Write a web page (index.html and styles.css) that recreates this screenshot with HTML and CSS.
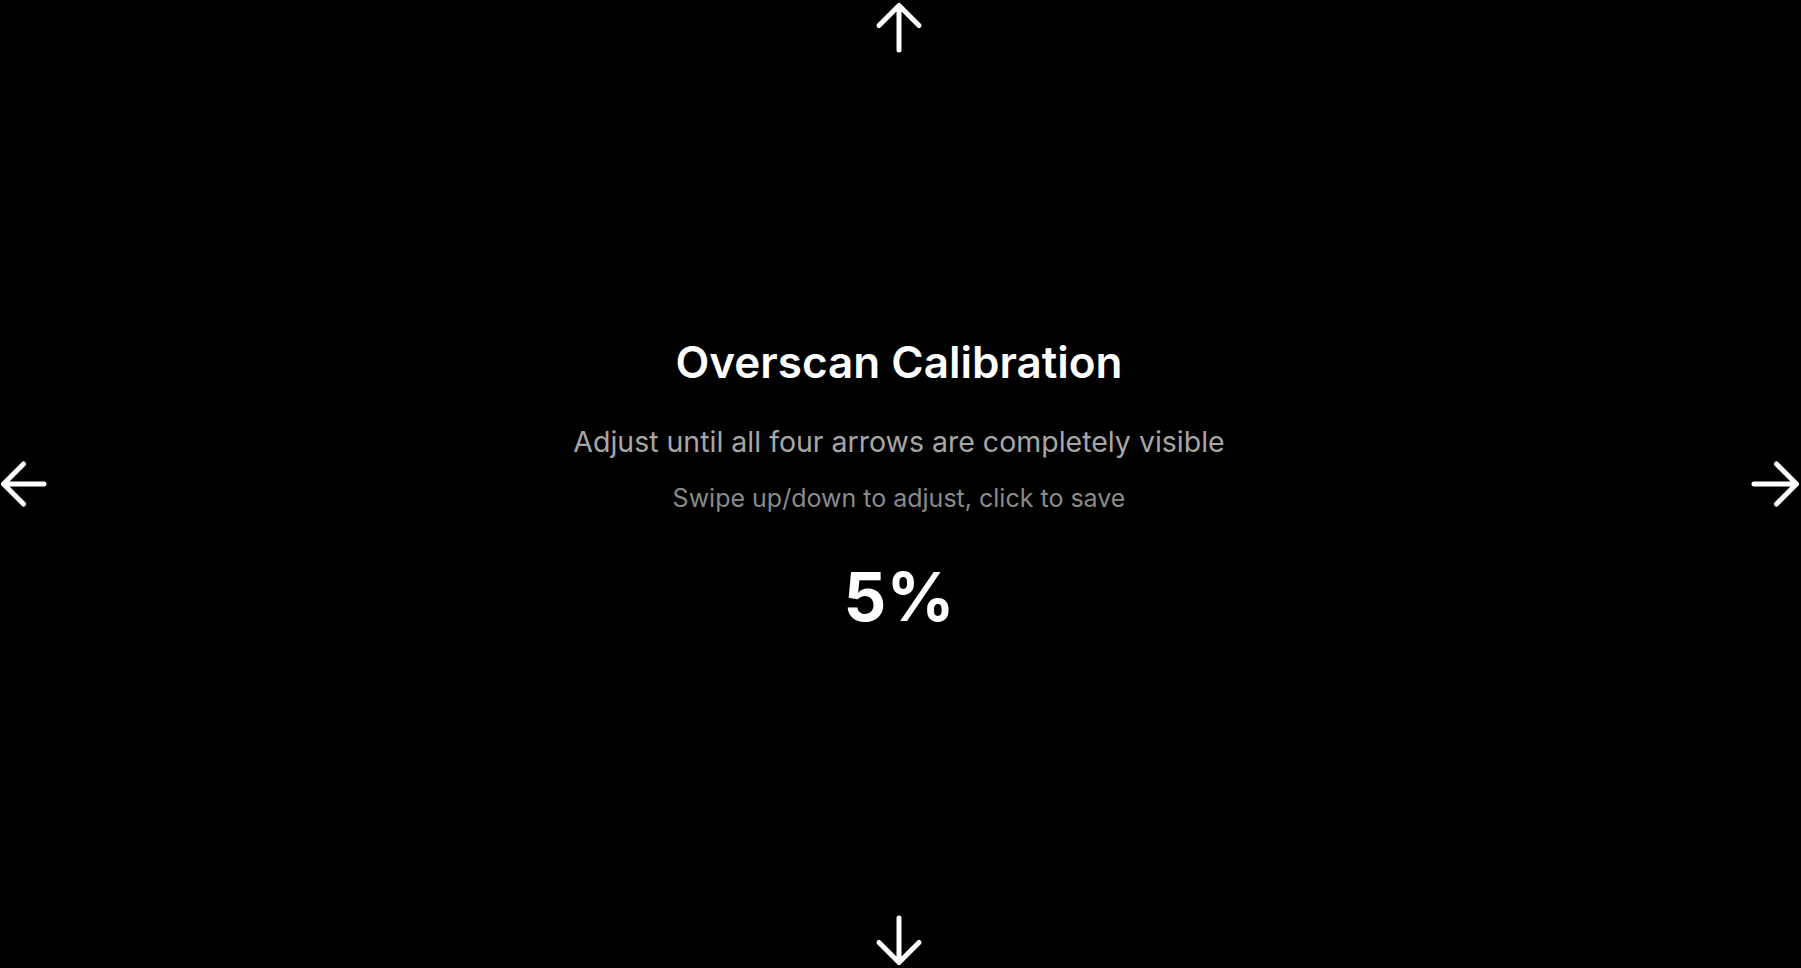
FILE: index.html
```html
<!DOCTYPE html>
<html lang="en">
<head>
    <meta charset="UTF-8">
    <meta name="viewport" content="width=device-width, initial-scale=1.0">
    <title>Overscan Calibration</title>
    <link rel="stylesheet" href="styles.css">
</head>
<body>
    <div class="screen">
        <!-- edge arrows: the user shrinks the picture until all four are inside the TV frame -->
        <svg class="arrow arrow-up" viewBox="0 0 56 56" width="56" height="56">
            <path d="M28 50V5.5M8 25.5L28 5.5L48 25.5"/>
        </svg>

        <svg class="arrow arrow-left" viewBox="0 0 56 56" width="56" height="56">
            <path d="M44 28H3.5M23.5 8L3.5 28L23.5 48"/>
        </svg>

        <div class="panel">
            <h1 class="title">Overscan Calibration</h1>
            <p class="subtitle">Adjust until all four arrows are completely visible</p>
            <p class="hint">Swipe up/down to adjust, click to save</p>
            <div class="value" id="value">5%</div>
        </div>

        <svg class="arrow arrow-right" viewBox="0 0 56 56" width="56" height="56">
            <path d="M9 28H51.5M31.5 8L51.5 28L31.5 48"/>
        </svg>

        <svg class="arrow arrow-down" viewBox="0 0 56 56" width="56" height="56">
            <path d="M28 6V50.5M8 30.5L28 50.5L48 30.5"/>
        </svg>
    </div>
</body>
</html>
```

FILE: styles.css
```css
html, body {
    margin: 0;
    height: 100%;
}
body {
    background: #000;
    color: #fff;
    font-family: Inter, 'Noto Sans', 'Liberation Sans', sans-serif;
    overflow: hidden;
}
.screen {
    display: grid;
    grid-template-columns: 56px 1fr 59px;
    grid-template-rows: 56px 1fr 56px;
    height: 100vh;
}
.arrow {
    display: block;
    fill: none;
    stroke: #fff;
    stroke-width: 5;
    stroke-linecap: round;
    stroke-linejoin: round;
}
.arrow-up {
    grid-column: 2;
    grid-row: 1;
    justify-self: center;
}
.arrow-left {
    grid-column: 1;
    grid-row: 2;
    align-self: center;
}
.arrow-right {
    grid-column: 3;
    grid-row: 2;
    align-self: center;
    justify-self: end;
}
.arrow-down {
    grid-column: 2;
    grid-row: 3;
    justify-self: center;
}
.panel {
    grid-column: 2;
    grid-row: 2;
    display: flex;
    flex-direction: column;
    align-items: center;
    justify-content: center;
    padding-top: 4px;
    text-align: center;
}
.title {
    margin: 0;
    font-size: 44px;
    font-weight: 600;
    line-height: 53px;
}
.subtitle {
    margin: 36px 0 0;
    font-size: 28.5px;
    line-height: 34px;
    color: #a6a6a6;
}
.hint {
    margin: 24px 0 0;
    font-size: 25px;
    line-height: 30px;
    color: #8a8a8a;
}
.value {
    margin-top: 44px;
    font-size: 67px;
    font-weight: 700;
    line-height: 80px;
}
```
